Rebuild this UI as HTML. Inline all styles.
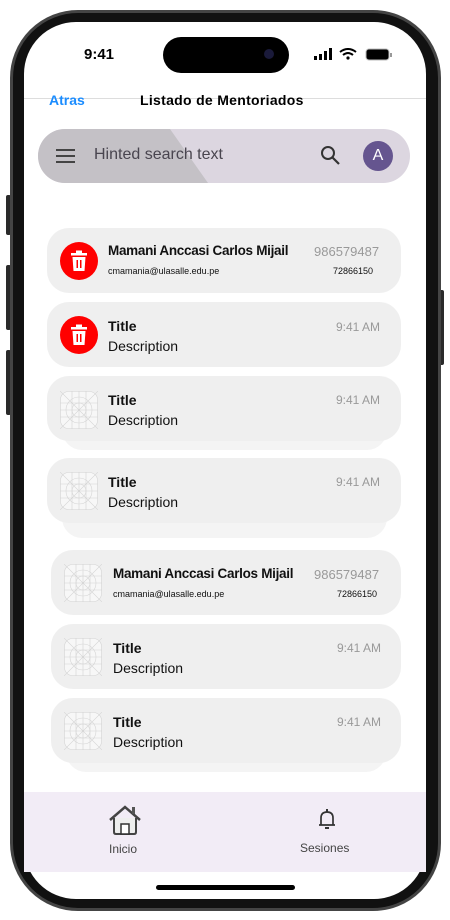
<!DOCTYPE html>
<html><head><meta charset="utf-8"><style>
*{margin:0;padding:0;box-sizing:border-box}
body{width:450px;height:920px;background:#fff;position:relative;overflow:hidden;font-family:"Liberation Sans",sans-serif}
.abs{position:absolute}
.frame{left:10px;top:10px;width:431px;height:901px;border-radius:68px;background:#111;border:3px solid #444}
.screen{left:24px;top:22px;width:402px;height:877px;border-radius:52px;background:#fff;overflow:hidden}
.btn{background:#2a2a2a;width:5px;border-radius:2px}
.card{position:absolute;background:#efefef;border-radius:22px;height:65px}
.strip{position:absolute;background:#f4f4f4;border-radius:0 0 20px 20px}
.t{position:absolute;font-size:14px;color:#111}
.d{position:absolute;font-size:14px;color:#111}
.tm{position:absolute;font-size:12px;color:#999}
.ic{position:absolute;width:38px;height:38px}
.nm{font-size:13.5px!important;letter-spacing:-0.3px;font-weight:bold}
</style></head><body>
<div class="abs btn" style="left:6px;top:195px;height:40px"></div>
<div class="abs btn" style="left:6px;top:265px;height:65px"></div>
<div class="abs btn" style="left:6px;top:350px;height:65px"></div>
<div class="abs btn" style="left:439px;top:290px;height:75px"></div>
<div class="abs frame"></div>
<div class="abs screen">
 <div class="abs" style="left:139px;top:15px;width:126px;height:36px;border-radius:18px;background:#000"></div>
 <div class="abs" style="left:240px;top:27px;width:10px;height:10px;border-radius:5px;background:#1a1a3a"></div>
 <div class="abs" style="left:60px;top:24px;font-weight:bold;font-size:15px">9:41</div>
 <svg class="abs" style="left:290px;top:26px" width="80" height="14">
  <rect x="0" y="8" width="3" height="4" fill="#000"/><rect x="5" y="6" width="3" height="6" fill="#000"/><rect x="10" y="3" width="3" height="9" fill="#000"/><rect x="15" y="0" width="3" height="12" fill="#000"/>
  <path d="M26 4 Q34 -2 42 4" stroke="#000" stroke-width="2" fill="none"/><path d="M29 7 Q34 3 39 7" stroke="#000" stroke-width="2" fill="none"/><circle cx="34" cy="10" r="1.6" fill="#000"/>
  <rect x="52" y="1" width="23" height="11" rx="3" fill="#000" stroke="#bbb"/><rect x="76" y="5" width="2" height="4" fill="#999"/>
 </svg>
 <div class="abs" style="left:0;top:76px;width:402px;height:1px;background:#ddd"></div>
 <div class="abs" style="left:25px;top:70px;color:#1a8cff;font-weight:bold;font-size:14px">Atras</div>
 <div class="abs" style="left:116px;top:70px;font-weight:bold;font-size:14px;letter-spacing:0.3px">Listado de Mentoriados</div>
 <div class="abs" style="left:14px;top:107px;width:372px;height:54px;border-radius:27px;background:#dcd6e0;overflow:hidden">
  <div class="abs" style="left:0;top:0;width:170px;height:54px;background:#c4c1c6;clip-path:polygon(0 0,132px 0,170px 54px,0 54px)"></div>
  <div class="abs" style="left:18px;top:20px;width:19px;height:2px;background:#444;box-shadow:0 6px 0 #444,0 12px 0 #444"></div>
  <div class="abs" style="left:56px;top:17px;font-size:16px;color:#49454f">Hinted search text</div>
  <svg class="abs" style="left:282px;top:16px" width="22" height="22"><circle cx="8" cy="8" r="6" stroke="#333" stroke-width="2" fill="none"/><path d="M12.5 12.5 L19 19" stroke="#333" stroke-width="2.2"/></svg>
  <div class="abs" style="left:325px;top:12px;width:30px;height:30px;border-radius:15px;background:#65558f;color:#fff;text-align:center;line-height:30px;font-size:16px">A</div>
 </div>
</div>
<div class="strip" style="left:62px;top:420px;width:325px;height:30px"></div>
<div class="strip" style="left:62px;top:505px;width:325px;height:33px"></div>
<div class="strip" style="left:66px;top:745px;width:320px;height:27px"></div>

<div class="card" style="left:47px;top:228px;width:354px"></div>
<div class="card" style="left:47px;top:302px;width:354px"></div>
<div class="card" style="left:47px;top:376px;width:354px"></div>
<div class="card" style="left:47px;top:458px;width:354px"></div>
<div class="card" style="left:51px;top:550px;width:350px"></div>
<div class="card" style="left:51px;top:624px;width:350px"></div>
<div class="card" style="left:51px;top:698px;width:350px"></div>

<svg width="0" height="0" style="position:absolute"><defs>
<g id="tr"><circle cx="19" cy="19" r="19" fill="#f00"/><rect x="11" y="11" width="16" height="2.5" fill="#fff"/><rect x="16" y="8.5" width="6" height="2.5" fill="#fff"/><path d="M12.5 15 H25.5 L24.5 29 H13.5Z" fill="#fff"/><rect x="16.5" y="18" width="1.5" height="8" fill="#f00"/><rect x="20" y="18" width="1.5" height="8" fill="#f00"/></g>
<g id="ph" stroke="#d4d4d4" stroke-width="0.6" fill="none"><rect x="0.5" y="0.5" width="37" height="37" rx="8" fill="#f7f7f7"/><path d="M0 0L38 38M38 0L0 38M12 0V38M26 0V38M0 12H38M0 26H38M19 0V38M0 19H38"/><circle cx="19" cy="19" r="13"/><circle cx="19" cy="19" r="7"/></g>
</defs></svg>
<svg class="ic" style="left:60px;top:242px"><use href="#tr"/></svg>
<svg class="ic" style="left:60px;top:316px"><use href="#tr"/></svg>
<svg class="ic" style="left:60px;top:391px"><use href="#ph"/></svg>
<svg class="ic" style="left:60px;top:472px"><use href="#ph"/></svg>
<svg class="ic" style="left:64px;top:564px"><use href="#ph"/></svg>
<svg class="ic" style="left:64px;top:638px"><use href="#ph"/></svg>
<svg class="ic" style="left:64px;top:712px"><use href="#ph"/></svg>

<div class="t nm" style="left:108px;top:243px">Mamani Anccasi Carlos Mijail</div>
<div class="tm" style="left:314px;top:244px;font-size:13px">986579487</div>
<div class="t" style="left:108px;top:266px;font-size:9px">cmamania@ulasalle.edu.pe</div>
<div class="t" style="left:333px;top:266px;font-size:9px">72866150</div>

<div class="t" style="left:108px;top:318px;font-weight:bold">Title</div><div class="d" style="left:108px;top:338px">Description</div><div class="tm" style="left:336px;top:320px">9:41 AM</div>
<div class="t" style="left:108px;top:392px;font-weight:bold">Title</div><div class="d" style="left:108px;top:412px">Description</div><div class="tm" style="left:336px;top:393px">9:41 AM</div>
<div class="t" style="left:108px;top:474px;font-weight:bold">Title</div><div class="d" style="left:108px;top:494px">Description</div><div class="tm" style="left:336px;top:475px">9:41 AM</div>

<div class="t nm" style="left:113px;top:566px">Mamani Anccasi Carlos Mijail</div>
<div class="tm" style="left:314px;top:567px;font-size:13px">986579487</div>
<div class="t" style="left:113px;top:589px;font-size:9px">cmamania@ulasalle.edu.pe</div>
<div class="t" style="left:337px;top:589px;font-size:9px">72866150</div>

<div class="t" style="left:113px;top:640px;font-weight:bold">Title</div><div class="d" style="left:113px;top:660px">Description</div><div class="tm" style="left:337px;top:641px">9:41 AM</div>
<div class="t" style="left:113px;top:714px;font-weight:bold">Title</div><div class="d" style="left:113px;top:734px">Description</div><div class="tm" style="left:337px;top:715px">9:41 AM</div>

<div class="abs" style="left:24px;top:792px;width:402px;height:80px;background:#f2ecf6"></div>
<svg class="abs" style="left:108px;top:804px" width="34" height="32"><path d="M2 16 L17 3 L32 16" stroke="#444" stroke-width="2.5" fill="none"/><path d="M6 14 V28 Q6 30 8 30 H26 Q28 30 28 28 V14" stroke="#444" stroke-width="2" fill="#eee"/><rect x="13" y="20" width="8" height="10" stroke="#333" stroke-width="1.5" fill="#fff"/><rect x="24" y="3" width="3" height="7" fill="#555"/></svg>
<div class="abs" style="left:109px;top:842px;font-size:12px;color:#444">Inicio</div>
<svg class="abs" style="left:317px;top:808px" width="20" height="24"><path d="M4 17 V10 Q4 4 10 4 Q16 4 16 10 V17 H18 M2 17 H18" stroke="#333" stroke-width="1.7" fill="none"/><rect x="9" y="1" width="2" height="3" fill="#333"/><rect x="8" y="19" width="4" height="2" fill="#333"/></svg>
<div class="abs" style="left:300px;top:841px;font-size:12px;color:#444">Sesiones</div>
<div class="abs" style="left:156px;top:885px;width:139px;height:5px;border-radius:3px;background:#000"></div>
</body></html>
